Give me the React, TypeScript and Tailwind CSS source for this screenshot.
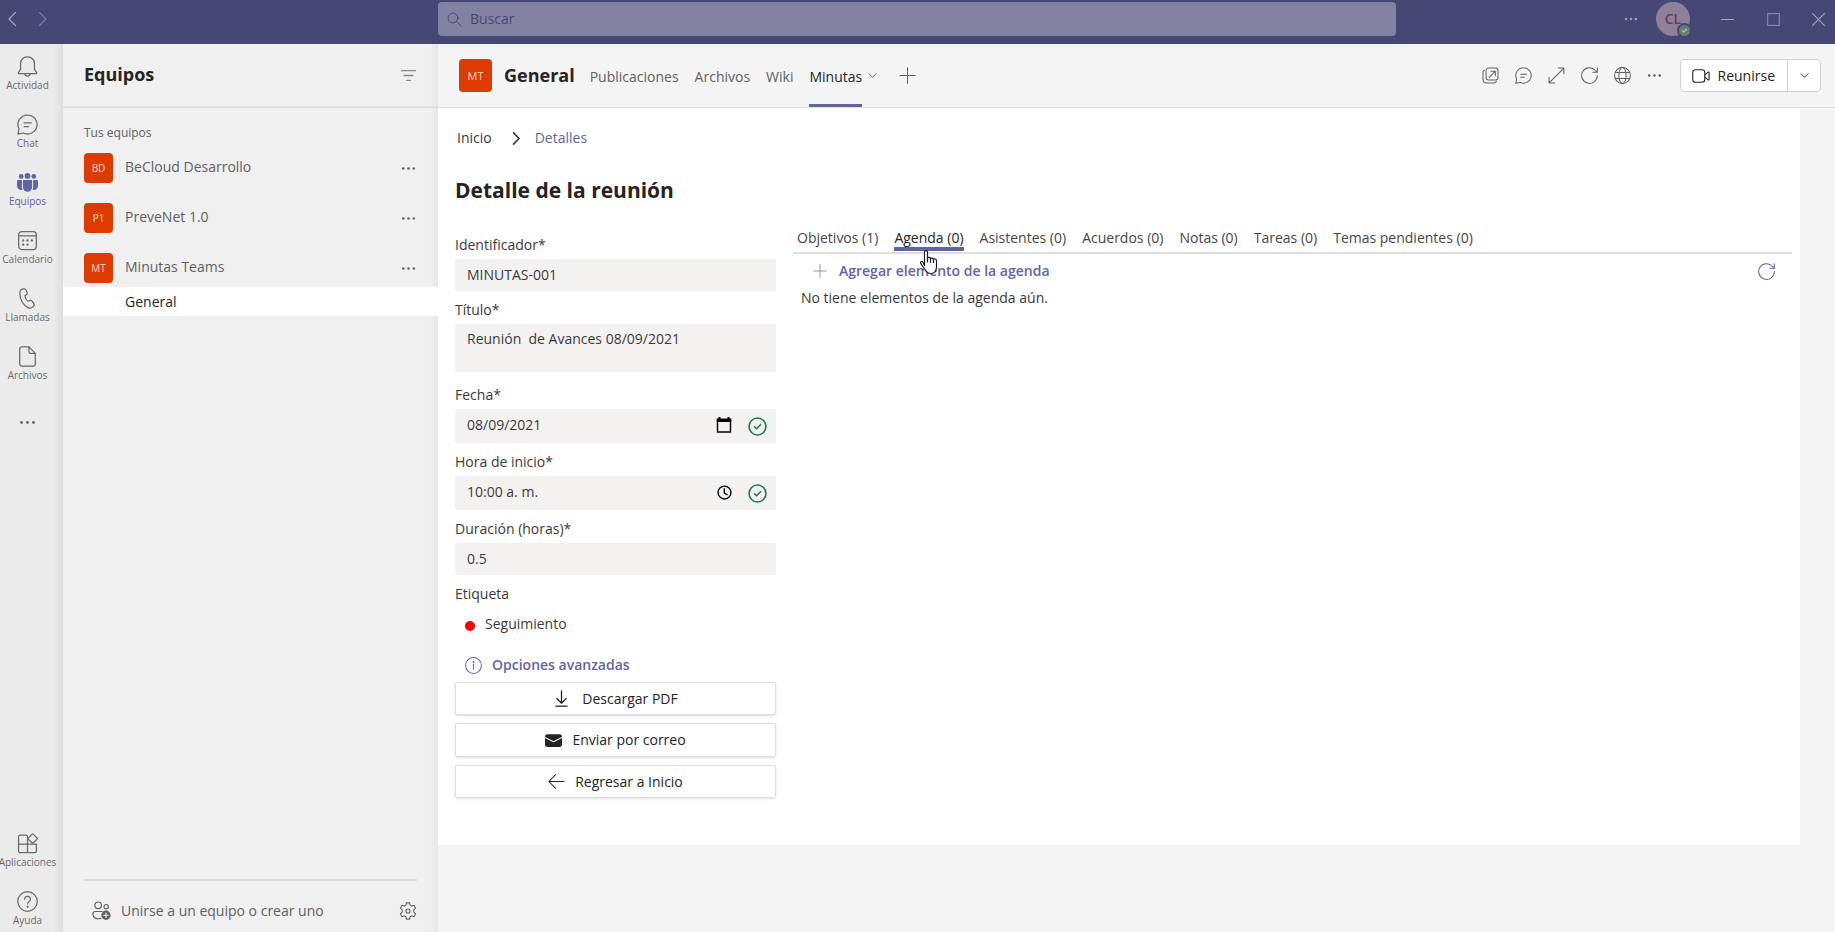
import React, { useState } from 'react';

interface IconProps {
  size?: number;
  className?: string;
  strokeWidth?: number;
  children?: React.ReactNode;
}

const Icon: React.FC<IconProps> = ({ size = 20, className = '', strokeWidth = 1.2, children }) => (
  <svg
    width={size}
    height={size}
    viewBox="0 0 20 20"
    fill="none"
    stroke="currentColor"
    strokeWidth={strokeWidth}
    strokeLinecap="round"
    strokeLinejoin="round"
    className={`shrink-0 ${className}`}
    aria-hidden="true"
  >
    {children}
  </svg>
);

const BellIcon = (props: IconProps) => (
  <Icon {...props}>
    <path d="M10 .8c-4 0-6.600 2.800-6.600 6.500v5.200L1.300 16c-.2.400 0 .8.500.8h16.400c.5 0 .7-.4.500-.8l-2.100-3.500V7.300C16.600 3.600 14 .8 10 .8z" />
    <path d="M7.400 17c.3 1.400 1.300 2.100 2.600 2.100s2.300-.7 2.600-2.100" />
  </Icon>
);

const ChatIcon = (props: IconProps) => (
  <Icon {...props}>
    <path d="M10.200 1a9 9 0 1 1-4 17.100L.9 19.200l1-5.100A9 9 0 0 1 10.200 1z" />
    <path d="M6.700 8.400h7M6.700 12h4.200" />
  </Icon>
);

const TeamsIcon = (props: IconProps) => (
  <Icon {...props}>
    <g fill="currentColor" stroke="none">
      <circle cx="10" cy="3.700" r="2.700" />
      <circle cx="4" cy="4.200" r="2.300" />
      <circle cx="16" cy="4.200" r="2.300" />
      <path d="M5.700 7.700h8.600v6.800a4.300 4.300 0 0 1-8.600 0z" />
      <path d="M0 8.700c0-.6.4-1 1-1h3.700v6.800c0 1 .2 1.800.6 2.500C2.500 17.800 0 16.200 0 13.200z" />
      <path d="M20 8.700c0-.6-.4-1-1-1h-3.700v6.800c0 1-.2 1.800-.6 2.500 2.800.8 5.300-.8 5.300-3.800z" />
    </g>
  </Icon>
);

const CalendarIcon = (props: IconProps) => (
  <Icon {...props}>
    <rect x="1.600" y="1.600" width="16.800" height="17" rx="2.800" />
    <path d="M1.600 5.600h16.800" />
    <g fill="currentColor" stroke="none">
      <circle cx="5.900" cy="10" r="1.100" />
      <circle cx="10" cy="10" r="1.100" />
      <circle cx="14.100" cy="10" r="1.100" />
      <circle cx="5.900" cy="14" r="1.100" />
      <circle cx="10" cy="14" r="1.100" />
    </g>
  </Icon>
);

const PhoneIcon = (props: IconProps) => (
  <Icon {...props}>
    <path d="M5.800.9l1-.1c.9-.1 1.600.4 1.900 1.200l.9 2.500c.2.700 0 1.400-.5 1.800L7.500 7.600c.3 1.900 1.300 3.700 2.800 4.900l2.200-.6c.7-.2 1.400.1 1.800.7l1.800 2.400c.5.700.4 1.600-.2 2.200l-.8.8c-1.200 1.200-3 1.500-4.500.7C6 16.400 3 11.500 2.700 5.300 2.600 3.100 3.800 1.200 5.800.9z" />
  </Icon>
);

const FileIcon = (props: IconProps) => (
  <Icon {...props}>
    <path d="M4.600.8h6.800l6 6.200v10.200c0 1.100-.8 2-2 2H4.600c-1.100 0-2-.9-2-2V2.800c0-1.100.9-2 2-2z" />
    <path d="M11.400.8V5.500c0 .8.600 1.500 1.500 1.500h4.500" />
  </Icon>
);

const AppsIcon = (props: IconProps) => (
  <Icon {...props}>
    <path d="M1.500 10.500h17v6.700c0 .9-.7 1.600-1.600 1.600H3.100c-.9 0-1.600-.7-1.600-1.600zM1.500 10.500V3.600c0-.9.700-1.600 1.600-1.600H8.400c.9 0 1.600.7 1.600 1.600v15.200" />
    <path d="M14.400 1.100c.3-.3.700-.3 1 0l3.700 3.700c.3.3.3.700 0 1l-3.700 3.700c-.3.3-.7.3-1 0l-3.700-3.700c-.3-.3-.3-.7 0-1z" />
  </Icon>
);

const HelpIcon = (props: IconProps) => (
  <Icon {...props}>
    <circle cx="10" cy="10" r="9.300" />
    <path d="M7.300 7.800c0-3.700 5.500-3.500 5.500 0 0 2-2.700 2.200-2.700 4.600" />
    <circle cx="10.100" cy="15.100" r=".5" fill="currentColor" />
  </Icon>
);

const DotsIcon = (props: IconProps) => (
  <Icon {...props}>
    <g fill="currentColor" stroke="none">
      <circle cx="3" cy="10" r="1.700" />
      <circle cx="10" cy="10" r="1.700" />
      <circle cx="17" cy="10" r="1.700" />
    </g>
  </Icon>
);

const ChevronLeft = (props: IconProps) => (
  <Icon {...props}><path d="M13.500 3.500L7 10l6.500 6.500" /></Icon>
);

const ChevronRight = (props: IconProps) => (
  <Icon {...props}><path d="M6.500 3.500L13 10l-6.500 6.500" /></Icon>
);

const ChevronDown = (props: IconProps) => (
  <Icon {...props}><path d="M2 6l8 8 8-8" /></Icon>
);

const PlusIcon = (props: IconProps) => (
  <Icon {...props}><path d="M10 1v18M1 10h18" /></Icon>
);

const SearchIcon = (props: IconProps) => (
  <Icon {...props}>
    <circle cx="8" cy="8" r="6.500" />
    <path d="M12.700 12.700l6.300 6.300" />
  </Icon>
);

const RefreshIcon = (props: IconProps) => (
  <Icon {...props}>
    <path d="M19.200 10A9.200 9.200 0 1 1 17 4.100l1.800 2" />
    <path d="M19.200 1v5.300h-5.300" />
  </Icon>
);

const PopOutIcon = (props: IconProps) => (
  <Icon {...props}>
    <rect x="4.800" y="1.300" width="14" height="14" rx="2.600" />
    <path d="M2.900 3.500C1.800 4 1.200 4.900 1.200 6v8.300c0 2.500 1.900 4.500 4.500 4.500h8.500c1.200 0 2.200-.6 2.700-1.700" />
    <path d="M8.500 12.200l6.700-6.700M10.500 5h5.200v5.200" />
  </Icon>
);

const ExpandIcon = (props: IconProps) => (
  <Icon {...props}>
    <path d="M1.800 18.200L18.200 1.800M12 1.300h6.700V8M1.300 12v6.700H8" />
  </Icon>
);

const GlobeIcon = (props: IconProps) => (
  <Icon {...props}>
    <circle cx="10" cy="10" r="9.300" />
    <ellipse cx="10" cy="10" rx="4.300" ry="9.300" />
    <path d="M1.600 6.600h16.800M1.600 13.400h16.800" />
  </Icon>
);

const VideoIcon = (props: IconProps) => (
  <Icon {...props}>
    <rect x=".8" y="3" width="13.400" height="14" rx="3" />
    <path d="M14.200 8.700l3.800-3c.4-.3 1-.1 1 .5v7.600c0 .6-.6.8-1 .5l-3.800-3" />
  </Icon>
);

const PeopleAddIcon = (props: IconProps) => (
  <Icon {...props}>
    <circle cx="6.500" cy="4.500" r="3.500" />
    <circle cx="14.900" cy="6" r="2.300" />
    <path d="M9.400 18.300c-4.500 1-8.400-.4-8.400-4.100v-1c0-1.300.9-2.200 2.200-2.200h7.600" />
    <circle cx="14.700" cy="15" r="4.900" fill="currentColor" stroke="none" />
    <path d="M14.700 12.700v4.600M12.400 15H17" stroke="#f0f0f0" />
  </Icon>
);

const GearIcon = (props: IconProps) => (
  <Icon {...props}>
    <path d="M8.200 1h3.600l.6 2.700 1.500.9 2.700-.9 1.900 3.200-2.100 1.900v2.400l2.100 1.900-1.900 3.200-2.700-.9-1.500.9-.6 2.700H8.200l-.6-2.700-1.500-.9-2.700.9-1.900-3.200 2.100-1.900V8.800L1.500 6.900l1.900-3.200 2.700.9 1.500-.9z" />
    <circle cx="10" cy="10" r="2.300" />
  </Icon>
);

const CheckCircle = (props: IconProps) => (
  <Icon {...props}>
    <circle cx="10" cy="10" r="8.900" />
    <path d="M6.800 10.300L9 12.400l4.200-4.300" />
  </Icon>
);

const InfoIcon = (props: IconProps) => (
  <Icon {...props}>
    <circle cx="10" cy="10" r="9.300" />
    <path d="M10 8.600v5.800" />
    <circle cx="10" cy="5.900" r=".5" fill="currentColor" />
  </Icon>
);

const railItems = [
  { label: 'Actividad', icon: BellIcon },
  { label: 'Chat', icon: ChatIcon },
  { label: 'Equipos', icon: TeamsIcon },
  { label: 'Calendario', icon: CalendarIcon },
  { label: 'Llamadas', icon: PhoneIcon },
  { label: 'Archivos', icon: FileIcon }
];

const railFooter = [
  { label: 'Aplicaciones', icon: AppsIcon },
  { label: 'Ayuda', icon: HelpIcon }
];

const teams = [
  { initials: 'BD', name: 'BeCloud Desarrollo' },
  { initials: 'P1', name: 'PreveNet 1.0' },
  { initials: 'MT', name: 'Minutas Teams' }
];

const channelTabs = ['Publicaciones', 'Archivos', 'Wiki'];

const headerActions = [
  { label: 'Abrir en ventana', icon: PopOutIcon },
  { label: 'Conversación', icon: ChatIcon },
  { label: 'Expandir', icon: ExpandIcon },
  { label: 'Recargar', icon: RefreshIcon },
  { label: 'Sitio web', icon: GlobeIcon }
];

const detailTabs = [
  'Objetivos (1)',
  'Agenda (0)',
  'Asistentes (0)',
  'Acuerdos (0)',
  'Notas (0)',
  'Tareas (0)',
  'Temas pendientes (0)'
];

const TitleBar: React.FC = () => (
  <header className="flex h-11 shrink-0 items-start bg-[#464775] text-[#a3a3ba]">
    <div className="flex h-[38px] w-[438px] shrink-0 items-center gap-[11px] pl-0.5">
      <button aria-label="Atrás"><ChevronLeft size={20} /></button>
      <button aria-label="Adelante" className="text-[#7a7a9c]"><ChevronRight size={20} /></button>
    </div>
    <label className="mt-0.5 flex h-[34px] flex-1 items-center gap-2 rounded bg-[#8282a2] pl-[9px] text-[#464775]">
      <SearchIcon size={15} />
      <input
        type="search"
        aria-label="Buscar"
        placeholder="Buscar"
        className="w-full bg-transparent text-sm outline-none placeholder:text-[#464775]"
      />
    </label>
    <div className="flex h-[38px] w-[439px] shrink-0 items-center justify-end pr-2.5">
      <button aria-label="Más opciones"><DotsIcon size={14} /></button>
      <button aria-label="Cuenta" className="relative ml-[18px] h-[34px] w-[34px] rounded-full bg-[#8f7f98] text-sm font-semibold text-[#5f3f5b]">
        CL
        <span className="absolute right-0 bottom-0 flex h-[11px] w-[11px] items-center justify-center rounded-full bg-[#64806e] text-[#b9c4c4] ring-2 ring-[#464775]">
          <Icon size={7} strokeWidth={3}><path d="M4 10.500l4 4 8-8.500" /></Icon>
        </span>
      </button>
      <button aria-label="Minimizar" className="ml-[31px]">
        <Icon size={13} strokeWidth={1.800}><path d="M0 10h20" /></Icon>
      </button>
      <button aria-label="Maximizar" className="ml-[33px] text-[#8585a5]">
        <Icon size={13} strokeWidth={1.800}><rect x="1" y="1" width="18" height="18" /></Icon>
      </button>
      <button aria-label="Cerrar" className="ml-8">
        <Icon size={13} strokeWidth={1.800}><path d="M1 1l18 18M19 1L1 19" /></Icon>
      </button>
    </div>
  </header>
);

const RailButton: React.FC<{ label: string; icon: React.FC<IconProps>; active?: boolean }> = ({ label, icon: ItemIcon, active }) => (
  <button
    className={`flex h-[51px] w-[55px] flex-col items-center pt-3 text-[10px] leading-4 ${
      active ? 'text-[#6264a7]' : 'text-[#6b6b6b]'
    }`}
  >
    <ItemIcon size={21} />
    <span className="whitespace-nowrap">{label}</span>
  </button>
);

const Rail: React.FC = () => (
  <nav className="flex w-[63px] shrink-0 flex-col gap-[7px] bg-linear-to-r from-[#ebebeb] from-85% to-[#dedede] pb-0.5">
    {railItems.map(item => (
      <RailButton key={item.label} {...item} active={item.label === 'Equipos'} />
    ))}
    <button aria-label="Más aplicaciones" className="flex h-[60px] w-[55px] items-center justify-center text-[#6b6b6b]">
      <DotsIcon size={17} />
    </button>
    <div className="mt-auto flex flex-col gap-[7px]">
      {railFooter.map(item => (
        <RailButton key={item.label} {...item} />
      ))}
    </div>
  </nav>
);

const Sidebar: React.FC = () => (
  <aside className="flex w-[375px] shrink-0 flex-col bg-linear-to-r from-[#f0f0f0] from-98% to-[#e6e6e6] text-sm text-[#616161]">
    <div className="flex h-16 items-center justify-between border-b-2 border-[#e0e0e0] pr-[22px] pl-[21px]">
      <h2 className="text-[18px] font-bold text-[#252423]">Equipos</h2>
      <button aria-label="Filtrar" className="text-[#8a8a8a]">
        <Icon size={15} strokeWidth={1.800}><path d="M0 3.500h20M4 10h12M7.500 16.500h5" /></Icon>
      </button>
    </div>
    <p className="mt-[15px] pl-[21px] text-xs leading-5">Tus equipos</p>
    <ul>
      {teams.map(team => (
        <li key={team.name} className="flex h-[50px] items-center pr-[22px] pl-[21px]">
          <span className="flex h-[30px] w-[29px] items-center justify-center rounded bg-[#dd3b00] text-[10px] text-[#f9d8cc]">
            {team.initials}
          </span>
          <span className="ml-3 flex-1 pb-0.5">{team.name}</span>
          <button aria-label={`Más opciones de ${team.name}`}><DotsIcon size={15} /></button>
        </li>
      ))}
    </ul>
    <a href="#general" className="-mt-1.5 block h-[29px] bg-white pl-[62px] leading-[29px] text-[#252423]">
      General
    </a>
    <div className="mt-auto mr-[21px] ml-[21px] flex h-[53px] shrink-0 items-center border-t-2 border-[#dedede] pt-2 pl-2">
      <PeopleAddIcon size={19} />
      <button className="ml-2.5 flex-1 text-left">Unirse a un equipo o crear uno</button>
      <button aria-label="Administrar equipos"><GearIcon size={18} /></button>
    </div>
  </aside>
);

const ChannelHeader: React.FC = () => (
  <div className="flex h-16 shrink-0 items-center border-b border-[#e1e1e1] pr-3.5 pl-[21px] text-sm text-[#616161]">
    <span className="flex h-[33px] w-[33px] items-center justify-center rounded bg-[#dd3b00] text-[11px] text-[#f9d8cc]">
      MT
    </span>
    <h1 className="mr-[15px] ml-3 text-[18px] font-bold text-[#252423]">General</h1>
    <nav className="flex h-full items-center gap-4">
      {channelTabs.map(tab => (
        <a key={tab} href={`#${tab.toLowerCase()}`} className="pt-0.5">{tab}</a>
      ))}
      <a
        href="#minutas"
        aria-current="page"
        className="flex h-full items-center border-y-3 border-t-transparent border-b-[#6264a7] pt-0.5 font-medium text-[#252423]"
      >
        Minutas
      </a>
    </nav>
    <button aria-label="Opciones de pestaña" className="ml-1.5"><ChevronDown size={9} strokeWidth={2} /></button>
    <button aria-label="Agregar pestaña" className="ml-[22px]"><PlusIcon size={17} /></button>
    <div className="ml-auto flex items-center gap-4">
      {headerActions.map(({ label, icon: ActionIcon }) => (
        <button key={label} aria-label={label}><ActionIcon size={17} /></button>
      ))}
      <button aria-label="Más opciones"><DotsIcon size={15} /></button>
    </div>
    <div className="ml-[18px] flex h-[33px] rounded border border-[#d1d1d1] bg-white text-[#252423]">
      <button className="flex items-center gap-2 border-r border-[#d1d1d1] pr-3 pl-[11px] font-medium">
        <VideoIcon size={18} />
        Reunirse
      </button>
      <button aria-label="Opciones de reunión" className="flex w-8 items-center justify-center">
        <ChevronDown size={9} strokeWidth={2} />
      </button>
    </div>
  </div>
);

interface FieldProps {
  id: string;
  label: string;
  children: React.ReactNode;
}

const Field: React.FC<FieldProps> = ({ id, label, children }) => (
  <div className="flex flex-col gap-1">
    <label htmlFor={id} className="h-5 leading-5">{label}</label>
    {children}
  </div>
);

const MeetingForm: React.FC = () => {
  const [form, setForm] = useState({
    identificador: 'MINUTAS-001',
    titulo: 'Reunión  de Avances 08/09/2021',
    fecha: '08/09/2021',
    hora: '10:00 a. m.',
    duracion: '0.5'
  });

  const handleChange = (e: React.ChangeEvent<HTMLInputElement | HTMLTextAreaElement>) => {
    setForm({ ...form, [e.target.id]: e.target.value });
  };

  return (
    <form className="flex w-[321px] shrink-0 flex-col gap-[9px] pt-[30px] text-[#3b3a39]">
      <Field id="identificador" label="Identificador*">
        <input id="identificador" value={form.identificador} onChange={handleChange} className="h-8 rounded-xs bg-[#f3f2f1] px-3 pb-0.5 outline-none" />
      </Field>
      <Field id="titulo" label="Título*">
        <textarea id="titulo" value={form.titulo} onChange={handleChange} className="mb-1 h-12 resize-none rounded-xs bg-[#f3f2f1] px-3 pt-[5px] leading-5 outline-none" />
      </Field>
      <Field id="fecha" label="Fecha*">
        <div className="flex h-[34px] items-center rounded-xs bg-[#f3f2f1] pr-[9px] pl-3">
          <input id="fecha" value={form.fecha} onChange={handleChange} className="min-w-0 flex-1 bg-transparent pb-0.5 outline-none" />
          <svg width="16" height="17" viewBox="0 0 16 17" className="mr-4 mb-0.5 text-black" aria-hidden="true">
            <path d="M3.500 0v2M12.500 0v2" stroke="currentColor" strokeWidth="2" />
            <path d="M1.500 3h13v12H1.500z" fill="none" stroke="currentColor" strokeWidth="1.400" />
            <path d="M.8 1.500h14.400V5H.8z" fill="currentColor" />
          </svg>
          <CheckCircle size={19} strokeWidth={1.700} className="text-[#237b4b]" />
        </div>
      </Field>
      <Field id="hora" label="Hora de inicio*">
        <div className="flex h-[34px] items-center rounded-xs bg-[#f3f2f1] pr-[9px] pl-3">
          <input id="hora" value={form.hora} onChange={handleChange} className="min-w-0 flex-1 bg-transparent pb-0.5 outline-none" />
          <Icon size={15} strokeWidth={1.800} className="mr-4 mb-0.5 text-black">
            <circle cx="10" cy="10" r="8.600" />
            <path d="M9.700 4.800v5.700l3.900 2.500" />
          </Icon>
          <CheckCircle size={19} strokeWidth={1.700} className="text-[#237b4b]" />
        </div>
      </Field>
      <Field id="duracion" label="Duración (horas)*">
        <input id="duracion" value={form.duracion} onChange={handleChange} className="h-8 rounded-xs bg-[#f3f2f1] px-3 pb-0.5 outline-none" />
      </Field>
      <p className="leading-5">Etiqueta</p>
      <p className="flex items-center gap-2.5 pt-px pl-2.5 leading-5 font-medium">
        <span className="mt-1 h-2.5 w-2.5 rounded-full bg-[#ff0000]" />
        Seguimiento
      </p>
      <button type="button" className="mt-3 flex items-center gap-2.5 pl-2.5 leading-5 font-semibold text-[#6264a7]">
        <InfoIcon size={17} />
        Opciones avanzadas
      </button>
      <div className="-mt-0.5 flex flex-col gap-2 text-[#252423]">
        <button type="button" className="flex h-[33px] items-center justify-center gap-3 rounded-xs border border-[#e1dfdd] font-medium shadow">
          <Icon size={17} strokeWidth={1.500}><path d="M10 1v14M4.500 10l5.500 5.500 5.500-5.500M3.500 19h13" /></Icon>
          Descargar PDF
        </button>
        <button type="button" className="flex h-[34px] items-center justify-center gap-2.5 rounded-xs border border-[#e1dfdd] font-medium shadow">
          <Icon size={17}>
            <rect x="0" y="2.500" width="20" height="15" rx="3" fill="currentColor" stroke="none" />
            <path d="M0 6.500l10 5 10-5" stroke="#fff" />
          </Icon>
          Enviar por correo
        </button>
        <button type="button" className="flex h-[33px] items-center justify-center gap-2.5 rounded-xs border border-[#e1dfdd] font-medium shadow">
          <Icon size={17}><path d="M19 10H1.500M9 2L1 10l8 8" /></Icon>
          Regresar a Inicio
        </button>
      </div>
    </form>
  );
};

const HandCursor: React.FC = () => (
  <svg width="19" height="25" viewBox="0 0 19 25" className="pointer-events-none absolute top-[22px] left-[25px] z-10" aria-hidden="true">
    <path
      d="M5.500 15.500V2.200c0-2 3-2 3 0v6c.3-1.200 2.900-1.100 3 .5.500-1 2.900-.8 3 .8.500-1 3-.7 3 1.200v5.800c0 4.200-2 7-5.500 7-3.200 0-4.600-1.300-6-4l-4.200-5.800c-1-1.600.8-2.800 2-1.800z"
      fill="#fff"
      stroke="#1b1a2e"
      strokeWidth="1.200"
      strokeLinejoin="round"
    />
    <path d="M8.500 8v4.500M11.500 8.700v4M14.500 9.500v3.500" stroke="#1b1a2e" strokeWidth="1.200" />
  </svg>
);

const DetailPanel: React.FC = () => {
  const [activeTab, setActiveTab] = useState('Agenda (0)');

  return (
    <section className="ml-[17px] min-w-0 flex-1 pt-[23px] text-[#3b3a39]">
      <div role="tablist" className="flex gap-4 border-b-2 border-[#e1dfdd] pb-px pl-1">
        {detailTabs.map(tab => (
          <button
            key={tab}
            role="tab"
            aria-selected={tab === activeTab}
            onClick={() => setActiveTab(tab)}
            className={`relative h-[23px] border-b-4 leading-5 whitespace-nowrap ${
              tab === activeTab ? 'border-[#6264a7] text-[#252423]' : 'border-transparent text-[#484644]'
            }`}
          >
            {tab}
            {tab === 'Agenda (0)' && <HandCursor />}
          </button>
        ))}
      </div>
      <div className="mt-1 flex h-[26px] items-center justify-between pr-[17px] pl-5 text-[#6264a7]">
        <button className="flex items-center gap-3 font-semibold">
          <PlusIcon size={14} className="opacity-80" />
          Agregar elemento de la agenda
        </button>
        <button aria-label="Actualizar"><RefreshIcon size={17} /></button>
      </div>
      <p className="mt-1 pl-2 leading-5">No tiene elementos de la agenda aún.</p>
    </section>
  );
};

const App: React.FC = () => (
  <div className="flex h-screen flex-col overflow-hidden font-['Open_Sans','Noto_Sans',sans-serif]">
    <TitleBar />
    <div className="flex min-h-0 flex-1">
      <Rail />
      <Sidebar />
      <main className="flex min-w-0 flex-1 flex-col overflow-hidden bg-[#f4f4f4]">
        <ChannelHeader />
        <div className="mr-[35px] bg-white pt-[19px] pr-2 pb-[47px] pl-[17px] text-sm">
          <nav aria-label="Ruta" className="flex h-[22px] items-center pl-0.5 text-[#3b3a39]">
            <a href="#inicio">Inicio</a>
            <ChevronRight size={17} strokeWidth={2} className="mr-2.5 ml-4" />
            <a href="#detalles" className="font-medium text-[#6264a7]">Detalles</a>
          </nav>
          <h2 className="mt-[26px] text-[21px] leading-[30px] font-bold text-[#252423]">Detalle de la reunión</h2>
          <div className="flex">
            <MeetingForm />
            <DetailPanel />
          </div>
        </div>
      </main>
    </div>
  </div>
);

export default App;
